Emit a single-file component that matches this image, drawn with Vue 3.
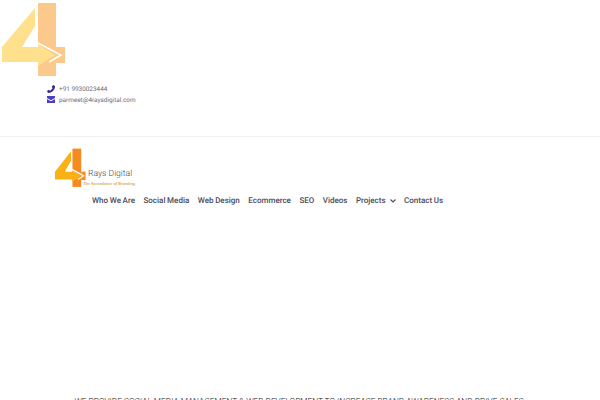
<script setup>
const links = ['Who We Are', 'Social Media', 'Web Design', 'Ecommerce', 'SEO', 'Videos', 'Projects', 'Contact Us']
</script>

<template>
  <div class="page">
    <header class="top">
      <svg class="big-logo" width="70" height="80" viewBox="0 0 70 80">
        <path d="M38 3H56V76H38Z" fill="#fbc98c" />
        <path d="M56 47H65V63H56Z" fill="#fbc98c" />
        <path d="M35 8V26L22 47H38V44L55 55L38 66V62H2V47Z" fill="#ffe08c" />
        <path d="M37 42.500L61 55L49 62" fill="none" stroke="#fff" stroke-width="1.500" />
      </svg>
      <div class="contact">
        <div class="row">
          <svg width="8" height="8" viewBox="0 0 8 8"><path d="M6 0L8 1C8 5 5 8 1 8L0 6L2 4.8L3 5.8C4 5.3 5.2 4 5.6 3L4.7 2Z" fill="#2f2a8a" /></svg>
          <span>+91 9930023444</span>
        </div>
        <div class="row">
          <svg width="8" height="7" viewBox="0 0 8 7"><path d="M0 0H8V2L4 4.2L0 2ZM0 3L4 5.2L8 3V7H0Z" fill="#4a3fc4" /></svg>
          <span>parmeet@4raysdigital.com</span>
        </div>
      </div>
    </header>

    <div class="brand">
      <div class="brand-logo">
        <svg width="34" height="42" viewBox="0 0 70 80" preserveAspectRatio="none">
          <path d="M38 3H56V76H38Z" fill="#f58a1f" />
          <path d="M56 47H65V63H56Z" fill="#f58a1f" />
          <path d="M35 8V26L22 47H38V44L55 55L38 66V62H2V47Z" fill="#fbb116" />
          <path d="M37 42.500L61 55L49 62" fill="none" stroke="#fff" stroke-width="2.500" />
        </svg>
        <div class="brand-text">
          <div class="name">Rays Digital</div>
          <div class="tag">The Ascendance of Branding</div>
        </div>
      </div>
      <nav class="nav">
        <a v-for="link in links" :key="link">
          {{ link }}
          <svg v-if="link === 'Projects'" width="6" height="4" viewBox="0 0 6 4"><path d="M.5.5L3 3L5.500.5" fill="none" stroke="#4a4a5a" stroke-width="1.1" /></svg>
        </a>
      </nav>
    </div>

    <p class="headline">WE PROVIDE SOCIAL MEDIA MANAGEMENT &amp; WEB DEVELOPMENT TO INCREASE BRAND AWARENESS AND DRIVE SALES.</p>
  </div>
</template>

<style>
body { overflow: hidden; background: #fff; }
</style>

<style scoped>
.page { height: 400px; overflow: hidden; font-family: Roboto, "Noto Sans", sans-serif; text-rendering: geometricPrecision; }
.top { height: 136px; border-bottom: 1px solid #f0f0f0; }
.big-logo { display: block; margin-bottom: 3.500px; }
.contact { margin-left: 47px; display: flex; flex-direction: column; gap: 1px; }
.row { display: flex; align-items: center; gap: 4px; height: 10px; font-size: 6.400px; color: #6b6b78; }
.row svg { flex: none; }
.brand { padding: 10px 0 0 54px; }
.brand-logo { display: flex; height: 42px; }
.brand-text { margin-left: -5px; padding-top: 22px; }
.name { margin-left: 5px; font-size: 8.600px; font-weight: 300; color: #444; line-height: 10px; }
.tag { margin-top: 1.500px; font-family: "Liberation Serif", serif; font-style: italic; font-size: 4.500px; color: #c8861a; line-height: 6px; white-space: nowrap; }
.nav { display: flex; align-items: center; gap: 8.500px; margin: 3.500px 0 0 38px; height: 16px; font-size: 8px; font-weight: 500; word-spacing: -0.300px; color: #4a4a5c; white-space: nowrap; }
.nav a { display: flex; align-items: center; gap: 4px; }
.headline { margin: 188.500px 0 0; text-align: center; font-size: 8.300px; font-weight: 300; color: #222; white-space: nowrap; }
</style>
